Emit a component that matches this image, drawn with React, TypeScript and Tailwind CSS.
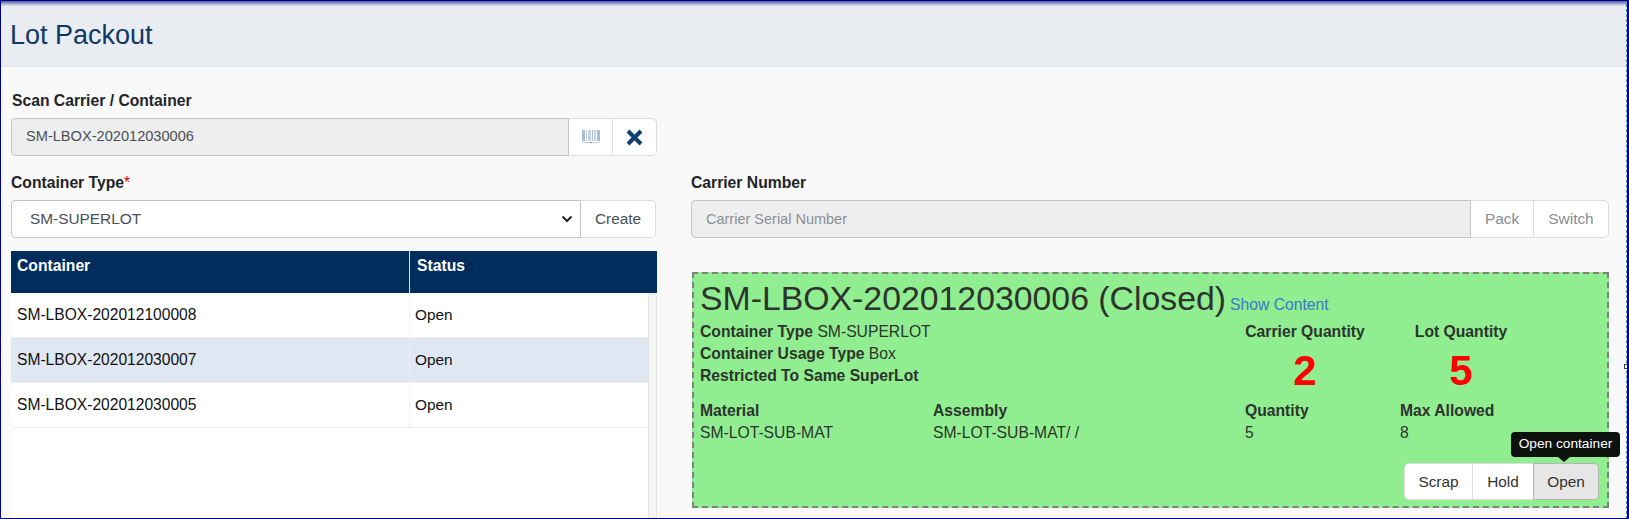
import React from "react";

const rows = [
  { id: "SM-LBOX-202012100008", status: "Open", bg: "bg-white" },
  { id: "SM-LBOX-202012030007", status: "Open", bg: "bg-[#dfe7f2]" },
  { id: "SM-LBOX-202012030005", status: "Open", bg: "bg-white" },
];

function Barcode() {
  return (
    <svg width="18" height="16" viewBox="0 0 18 16" aria-hidden="true">
      <g fill="#a9bcd3">
        <rect x="0" y="1" width="3" height="11" />
        <rect x="4" y="1" width="1" height="11" fill="#c6d3e2" />
        <rect x="6" y="1" width="3" height="11" fill="#c6d3e2" />
        <rect x="10" y="1" width="1" height="11" />
        <rect x="12" y="1" width="2" height="11" fill="#c6d3e2" />
        <rect x="15" y="1" width="3" height="11" />
      </g>
      <rect x="0" y="13" width="18" height="1" fill="#c6d3e2" />
      <rect x="8" y="13" width="2" height="1" fill="#6f8caf" />
    </svg>
  );
}

function CloseIcon() {
  return (
    <svg width="17" height="17" viewBox="0 0 17 17" aria-hidden="true">
      <path d="M2 2L15 15M15 2L2 15" stroke="#0f3f72" strokeWidth="4" fill="none" />
    </svg>
  );
}

function Chevron() {
  return (
    <svg width="12" height="8" viewBox="0 0 12 8" aria-hidden="true">
      <path d="M1.5 1.5L6 6L10.5 1.5" stroke="#222" strokeWidth="2" fill="none" />
    </svg>
  );
}

export default function App() {
  return (
    <div className="relative h-[519px] w-[1629px] overflow-hidden bg-[#f9f9f9] font-['Liberation_Sans',Arial,sans-serif] text-[15.7px] text-[#212529]">
      <header className="flex h-[67px] items-center border-b border-[#e2e5ee] bg-[#e9ecf1] pl-[10px] pt-[3px]">
        <h1 className="text-[27px] leading-[34px] text-[#0f3a66]">Lot Packout</h1>
      </header>

      <div className="flex">
        <section className="ml-[11px] w-[646px] shrink-0">
          <div className="mt-[23px] h-[22px] pl-px font-bold leading-[22px]">Scan Carrier / Container</div>
          <div className="mt-[6px] flex h-[38px]">
            <div className="flex w-[558px] items-center rounded-l-[4px] border border-[#c4c4c4] bg-[#eeeeee] pl-[14px] text-[14.6px] text-[#495057]">
              SM-LBOX-202012030006
            </div>
            <div className="flex w-[43px] items-center justify-center border-y border-[#dddddd] bg-white">
              <Barcode />
            </div>
            <div className="flex w-[45px] items-center justify-center rounded-r-[5px] border border-[#dddddd] bg-white">
              <CloseIcon />
            </div>
          </div>

          <div className="mt-[16px] h-[22px] font-bold leading-[22px]">
            Container Type<span className="font-normal text-red-600">*</span>
          </div>
          <div className="mt-[6px] flex h-[38px] pr-px">
            <div className="flex flex-1 items-center justify-between rounded-l-[4px] border border-[#c4c4c4] bg-white pl-[18px] pr-[7px] text-[15.4px] text-[#495057]">
              <span>SM-SUPERLOT</span>
              <Chevron />
            </div>
            <div className="flex w-[75px] items-center justify-center rounded-r-[5px] border-y border-r border-[#dddddd] bg-white text-[15.4px] text-[#495057]">
              Create
            </div>
          </div>

          <div className="mt-[13px] flex h-[42px] bg-[#012d5d] font-bold text-white">
            <div className="w-[399px] border-r border-[#dfe7f2] pl-[6px] pt-[4px] leading-[22px]">Container</div>
            <div className="flex-1 pl-[7px] pt-[4px] leading-[22px]">Status</div>
          </div>

          <div className="flex h-[226px]">
            <div className="flex-1 bg-white text-[#111]">
              {rows.map((r) => (
                <div key={r.id} className={`flex h-[45px] items-center border-b border-[#eeeeee] ${r.bg}`}>
                  <div className="flex h-full w-[399px] items-center border-r border-[#eeeeee] pl-[6px] text-[15.6px]">{r.id}</div>
                  <div className="pl-[5px] text-[15.4px]">{r.status}</div>
                </div>
              ))}
            </div>
            <div className="w-[9px] rounded-t-[4px] border-x border-t border-[#e4e4e4] bg-[#f5f5f5]" />
          </div>
        </section>

        <section className="ml-[34px] w-[918px] shrink-0">
          <div className="mt-[105px] h-[22px] font-bold leading-[22px]">Carrier Number</div>
          <div className="mt-[6px] flex h-[38px]">
            <div className="flex w-[780px] items-center rounded-l-[4px] border border-[#c4c4c4] bg-[#eeeeee] pl-[14px] pt-px text-[14.5px] text-[#8a8f94]">
              Carrier Serial Number
            </div>
            <div className="flex w-[62px] items-center justify-center border-y border-[#dddddd] bg-white text-[15.4px] text-[#868e96]">
              Pack
            </div>
            <div className="flex flex-1 items-center justify-center rounded-r-[5px] border border-[#dddddd] bg-white text-[15.4px] text-[#868e96]">
              Switch
            </div>
          </div>

          <div className="ml-px mt-[34px] flex h-[236px] w-[917px] flex-col border-2 border-dashed border-[#808080] bg-[#90ee90] pl-[6px] pr-[8px] pb-[6px] text-[#2d332d]">
            <div className="flex h-[46px] items-baseline whitespace-nowrap">
              <span className="text-[33.8px] leading-[48px]">SM-LBOX-202012030006 (Closed)</span>
              <a className="ml-[4px] text-[#3b78c9]">Show Content</a>
            </div>

            <div className="flex">
              <div className="w-[544px] pt-px leading-[22px]">
                <div><b>Container Type</b> SM-SUPERLOT</div>
                <div><b>Container Usage Type</b> Box</div>
                <div><b>Restricted To Same SuperLot</b></div>
              </div>
              <div className="w-[122px] pt-px text-center font-bold">
                <div className="leading-[22px]">Carrier Quantity</div>
                <div className="text-[42px] leading-[56px] text-[#ff0000]">2</div>
              </div>
              <div className="ml-[48px] w-[94px] pt-px text-center font-bold">
                <div className="leading-[22px]">Lot Quantity</div>
                <div className="text-[42px] leading-[56px] text-[#ff0000]">5</div>
              </div>
            </div>

            <div className="mt-[1px] grid grid-cols-[233px_312px_155px_1fr] leading-[22px]">
              <b>Material</b>
              <b>Assembly</b>
              <b>Quantity</b>
              <b>Max Allowed</b>
              <span>SM-LOT-SUB-MAT</span>
              <span>SM-LOT-SUB-MAT/ /</span>
              <span>5</span>
              <span>8</span>
            </div>

            <div className="mt-auto flex h-[37px] self-end text-[15.4px] text-[#333]">
              <div className="flex w-[69px] items-center justify-center rounded-l-[5px] border border-[#dddddd] bg-white">Scrap</div>
              <div className="flex w-[60px] items-center justify-center border-y border-[#dddddd] bg-white">Hold</div>
              <div className="flex w-[66px] items-center justify-center rounded-r-[5px] border border-[#b4b4b4] bg-[#e6e6e6]">Open</div>
            </div>
          </div>
        </section>
      </div>

      <div className="absolute left-[1511px] top-[432px] flex h-[25px] w-[109px] items-center justify-center rounded-[4px] bg-[#0d120e] text-[13.7px] text-white">
        Open container
      </div>
      <div className="absolute left-[1558px] top-[457px] h-0 w-0 border-x-[6px] border-t-[5px] border-x-transparent border-t-[#0d120e]" />

      <div className="absolute bottom-0 right-[2px] top-[4px] border-r border-dashed border-[#3b8fe0]" />
      <div className="absolute left-[1624px] top-[364px] h-[5px] w-[5px] border border-[#444] bg-white" />
      <div className="absolute inset-x-0 top-0 h-[6px] bg-gradient-to-b from-[#2b3b8f] to-transparent" />
      <div className="pointer-events-none absolute inset-0 border-y border-l border-r-2 border-[#00008b]" />
    </div>
  );
}
